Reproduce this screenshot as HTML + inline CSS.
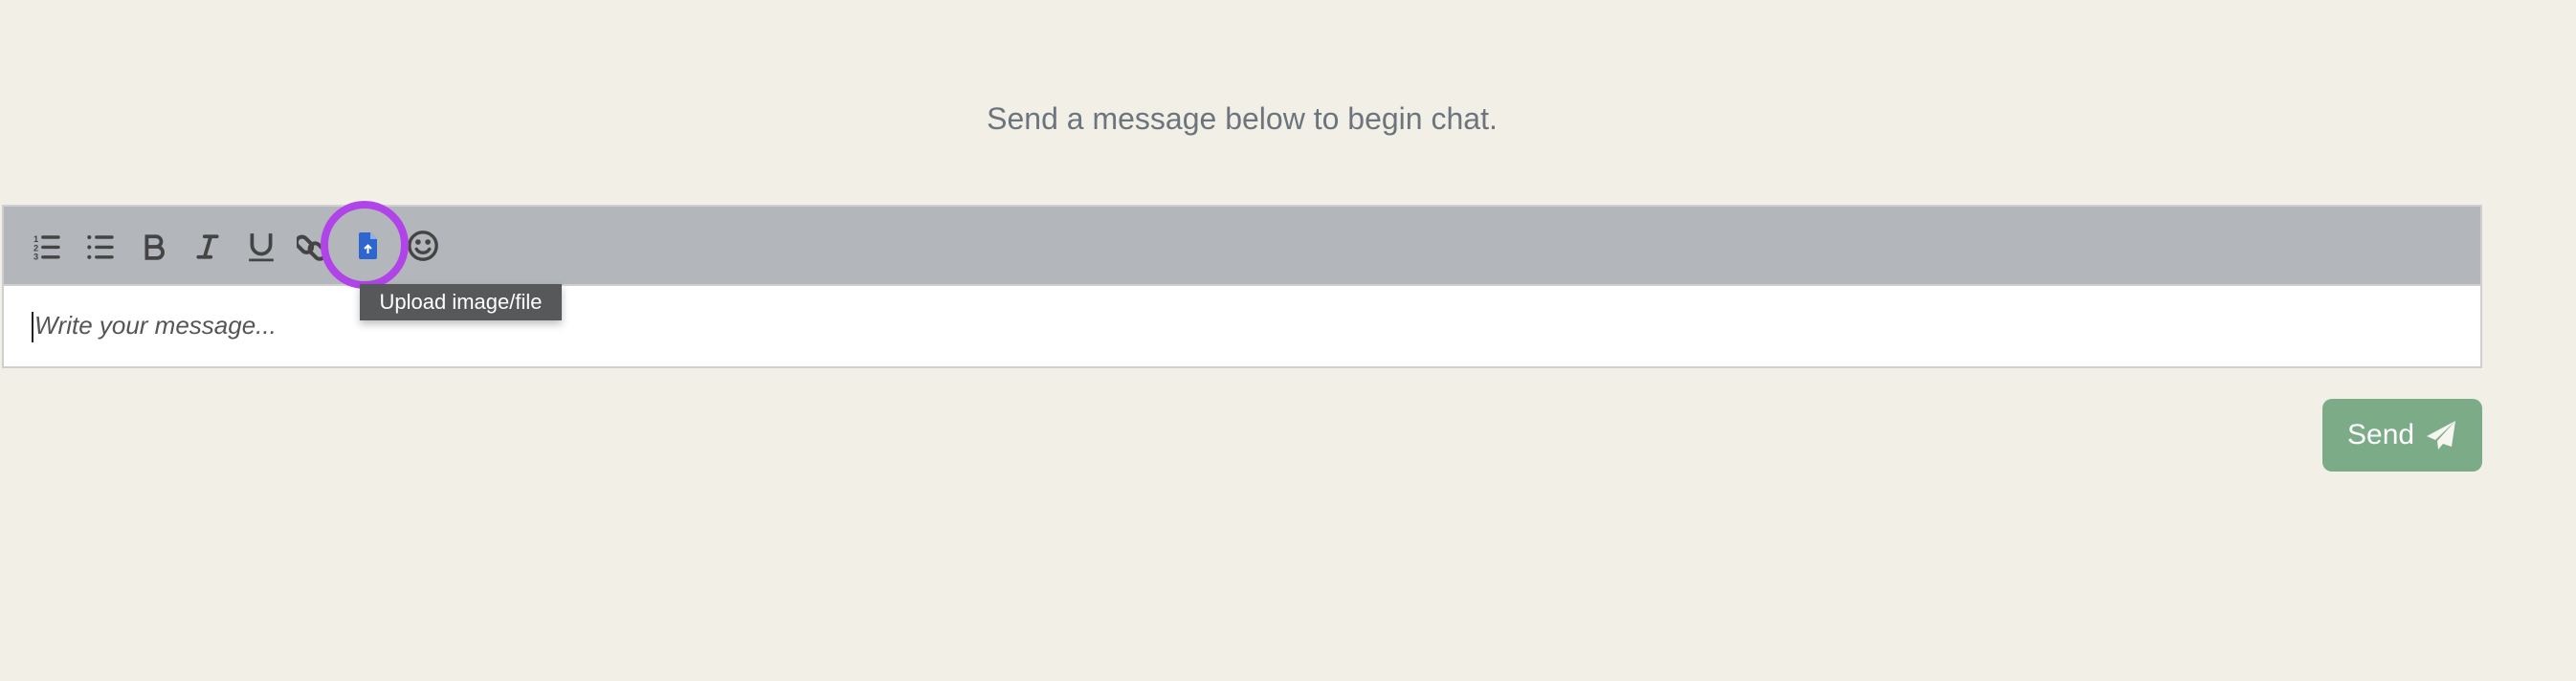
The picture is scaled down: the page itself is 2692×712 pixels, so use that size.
<!DOCTYPE html>
<html><head><meta charset="utf-8"><style>
body{margin:0;width:2692px;height:712px;background:#f2efe7;font-family:"Liberation Sans",sans-serif;position:relative;overflow:hidden}
.h{position:absolute;left:798px;top:106px;width:1000px;text-align:center;font-size:32px;color:#6c757d;white-space:nowrap}
.box{position:absolute;left:2px;top:214px;width:2588px;height:167px;border:2px solid #cfcfcf;background:#fff}
.tb{position:absolute;left:0;top:0;right:0;height:81px;background:#b3b6ba;border-bottom:2px solid #cfcfcf}
.ph{position:absolute;left:32px;top:109px;font-size:26px;font-style:italic;color:#555}
.cur{position:absolute;left:29px;top:110px;width:2px;height:32px;background:#222}
.ic{position:absolute}
.tip{position:absolute;left:376px;top:297px;width:211px;height:38px;background:#57585a;color:#fff;font-size:22px;line-height:38px;text-align:center;box-shadow:0 4px 8px rgba(0,0,0,.25)}
.ring{position:absolute;left:335px;top:210px;width:76px;height:76px;border:8px solid #b044e8;border-radius:50%}
.send{position:absolute;left:2427px;top:417px;width:167px;height:76px;background:#7bab87;border-radius:10px;color:#fff;font-size:30px;line-height:76px}
</style></head><body>
<div class="h">Send a message below to begin chat.</div>
<div class="box">
 <div class="tb">
  <svg class="ic" style="left:30px;top:28px" width="32" height="30" viewBox="0 0 26 26" fill="#444"><text x="0" y="8" font-size="8" font-weight="bold" font-family="Liberation Sans">1</text><text x="0" y="16" font-size="8" font-weight="bold" font-family="Liberation Sans">2</text><text x="0" y="24" font-size="8" font-weight="bold" font-family="Liberation Sans">3</text><rect x="7" y="2" width="17" height="3" rx="1.5"/><rect x="7" y="11" width="17" height="3" rx="1.5"/><rect x="7" y="20" width="17" height="3" rx="1.5"/></svg>
  <svg class="ic" style="left:86px;top:28px" width="32" height="30" viewBox="0 0 26 26" fill="#444"><circle cx="2" cy="3.5" r="1.8"/><circle cx="2" cy="12.5" r="1.8"/><circle cx="2" cy="21.5" r="1.8"/><rect x="7" y="2" width="17" height="3" rx="1.5"/><rect x="7" y="11" width="17" height="3" rx="1.5"/><rect x="7" y="20" width="17" height="3" rx="1.5"/></svg>
  <svg class="ic" style="left:146px;top:28px" width="24" height="28" viewBox="0 0 22 26" fill="none" stroke="#444" stroke-width="3.5"><path d="M3 3h9a5 5 0 0 1 0 10H3zM3 13h10a5.5 5.5 0 0 1 0 11H3z"/></svg>
  <svg class="ic" style="left:201px;top:28px" width="24" height="28" viewBox="0 0 22 26" fill="none" stroke="#444" stroke-width="3.5" stroke-linecap="round"><path d="M8 3h12M2 23h12M14 3L8 23"/></svg>
  <svg class="ic" style="left:255px;top:26px" width="28" height="32" viewBox="0 0 26 30" fill="none" stroke="#444" stroke-width="3.5"><path d="M4 2v11a9 9 0 0 0 18 0V2"/><path d="M1 28h24" stroke-width="2.5"/></svg>
  <svg class="ic" style="left:306px;top:26px" width="32" height="32" viewBox="0 0 28 28" fill="none" stroke="#444" stroke-width="3.5"><rect x="2" y="4" width="10" height="16" rx="5" transform="rotate(-45 7 12)"/><rect x="14" y="10" width="10" height="16" rx="5" transform="rotate(-45 19 18)"/></svg>
  <svg class="ic" style="left:370px;top:27px" width="22" height="28" viewBox="0 0 20 28"><path d="M2 0h10l7 7v19a2 2 0 0 1-2 2H2a2 2 0 0 1-2-2V2a2 2 0 0 1 2-2z" fill="#2d66cf"/><path d="M12 0v7h7" fill="#8fb0ea"/><path d="M9.5 22v-8M6 17l3.5-3.5L13 17" stroke="#fff" stroke-width="2" fill="none"/></svg>
  <svg class="ic" style="left:421px;top:24px" width="34" height="34" viewBox="0 0 30 30" fill="none" stroke="#444" stroke-width="3"><circle cx="15" cy="15" r="12.5"/><circle cx="10.5" cy="11.5" r="1" fill="#444"/><circle cx="19.5" cy="11.5" r="1" fill="#444"/><path d="M9 18a7 7 0 0 0 12 0" stroke-linecap="round"/></svg>
 </div>
 <div class="cur"></div>
 <div class="ph">Write your message...</div>
</div>
<div class="ring"></div>
<div class="tip">Upload image/file</div>
<div class="send"><span style="position:absolute;left:26px">Send</span><svg style="position:absolute;left:108px;top:22px" width="32" height="32" viewBox="0 0 32 32"><path d="M31 1L1 17l9 4zM31 1L12 22l1 9 5-6 9 3z" fill="#f7f5f0"/></svg></div>
</body></html>
